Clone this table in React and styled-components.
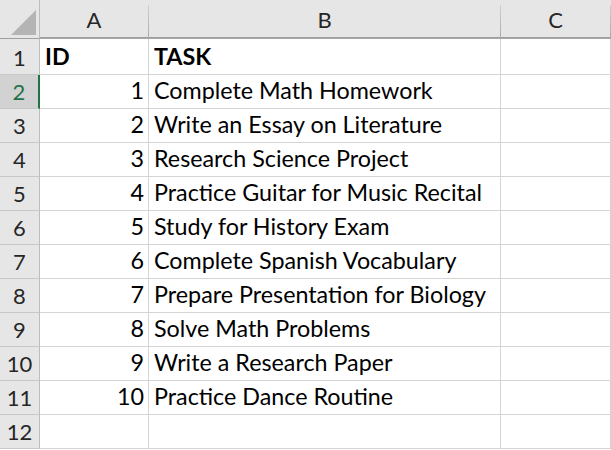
import React from 'react'
import styled, { createGlobalStyle } from 'styled-components'

const GlobalStyle = createGlobalStyle`
  html, body {
    margin: 0;
    padding: 0;
    background: #ffffff;
    overflow: hidden;
  }
  body {
    font-family: Lato, "Liberation Sans", sans-serif;
  }
`;

const Sheet = styled.div`
  display: grid;
  grid-template-columns: 40px 109px 352px 110px;
  grid-template-rows: 39px 36px repeat(11, 34px);
  width: 611px;
  height: 450px;
  overflow: hidden;
  font-family: Lato, "Liberation Sans", sans-serif;
  font-size: 23.3px;
  line-height: 1.2;
  color: #000;
`;

const Corner = styled.div`
  box-sizing: border-box;
  background: #e6e6e6;
  border-right: 1px solid #bdbdbd;
  border-bottom: 1px solid #9e9e9e;
  display: flex;
  align-items: flex-end;
  justify-content: flex-end;
  padding: 0 3px 3px 0;

  svg {
    display: block;
  }
`;

const ColHeader = styled.div`
  box-sizing: border-box;
  background: #e6e6e6;
  color: #262626;
  font-size: 22px;
  border-bottom: 1px solid #9e9e9e;
  border-right: 1px solid;
  border-image: linear-gradient(to bottom, transparent 6px, #d0d0d0 6px, #a8a8a8) 1;
  border-top: 0;
  border-left: 0;
  box-shadow: inset 0 -1px 0 #9e9e9e;
  display: flex;
  align-items: center;
  justify-content: center;
  padding-top: 3px;
`;

const RowHeader = styled.div`
  box-sizing: border-box;
  background: ${p => (p.$selected ? '#d2d2d2' : '#e6e6e6')};
  color: ${p => (p.$selected ? '#217346' : '#262626')};
  font-size: 22px;
  border-bottom: 1px solid #c8c8c8;
  border-right: ${p => (p.$selected ? '2px solid #217346' : '1px solid #bdbdbd')};
  display: flex;
  align-items: flex-end;
  justify-content: center;
  padding-bottom: 3px;
`;

const Cell = styled.div`
  box-sizing: border-box;
  border-right: 1px solid #d4d4d4;
  border-bottom: 1px solid #d4d4d4;
  display: flex;
  align-items: flex-end;
  justify-content: ${p => (p.$align === 'right' ? 'flex-end' : 'flex-start')};
  padding: 0 4px 3px 5px;
  font-weight: ${p => (p.$bold ? 700 : 400)};
  white-space: nowrap;
  overflow: visible;
`;

const tasks = [
  'Complete Math Homework',
  'Write an Essay on Literature',
  'Research Science Project',
  'Practice Guitar for Music Recital',
  'Study for History Exam',
  'Complete Spanish Vocabulary',
  'Prepare Presentation for Biology',
  'Solve Math Problems',
  'Write a Research Paper',
  'Practice Dance Routine',
];

const SelectAll = () => (
  <svg width="25" height="25" viewBox="0 0 25 25">
    <polygon points="25,0 25,25 0,25" fill="#b4b4b4" />
  </svg>
);

export default function App() {
  const rows = [
    { id: 'ID', task: 'TASK', bold: true },
    ...tasks.map((task, i) => ({ id: String(i + 1), task })),
    { id: '', task: '' },
  ];

  return (
    <>
      <GlobalStyle />
      <Sheet>
        <Corner>
          <SelectAll />
        </Corner>
        <ColHeader>A</ColHeader>
        <ColHeader>B</ColHeader>
        <ColHeader>C</ColHeader>
        {rows.map((row, i) => (
          <React.Fragment key={i}>
            <RowHeader $selected={i === 1}>{i + 1}</RowHeader>
            <Cell $align={row.bold ? 'left' : 'right'} $bold={row.bold}>
              {row.id}
            </Cell>
            <Cell $bold={row.bold}>{row.task}</Cell>
            <Cell />
          </React.Fragment>
        ))}
      </Sheet>
    </>
  );
}
